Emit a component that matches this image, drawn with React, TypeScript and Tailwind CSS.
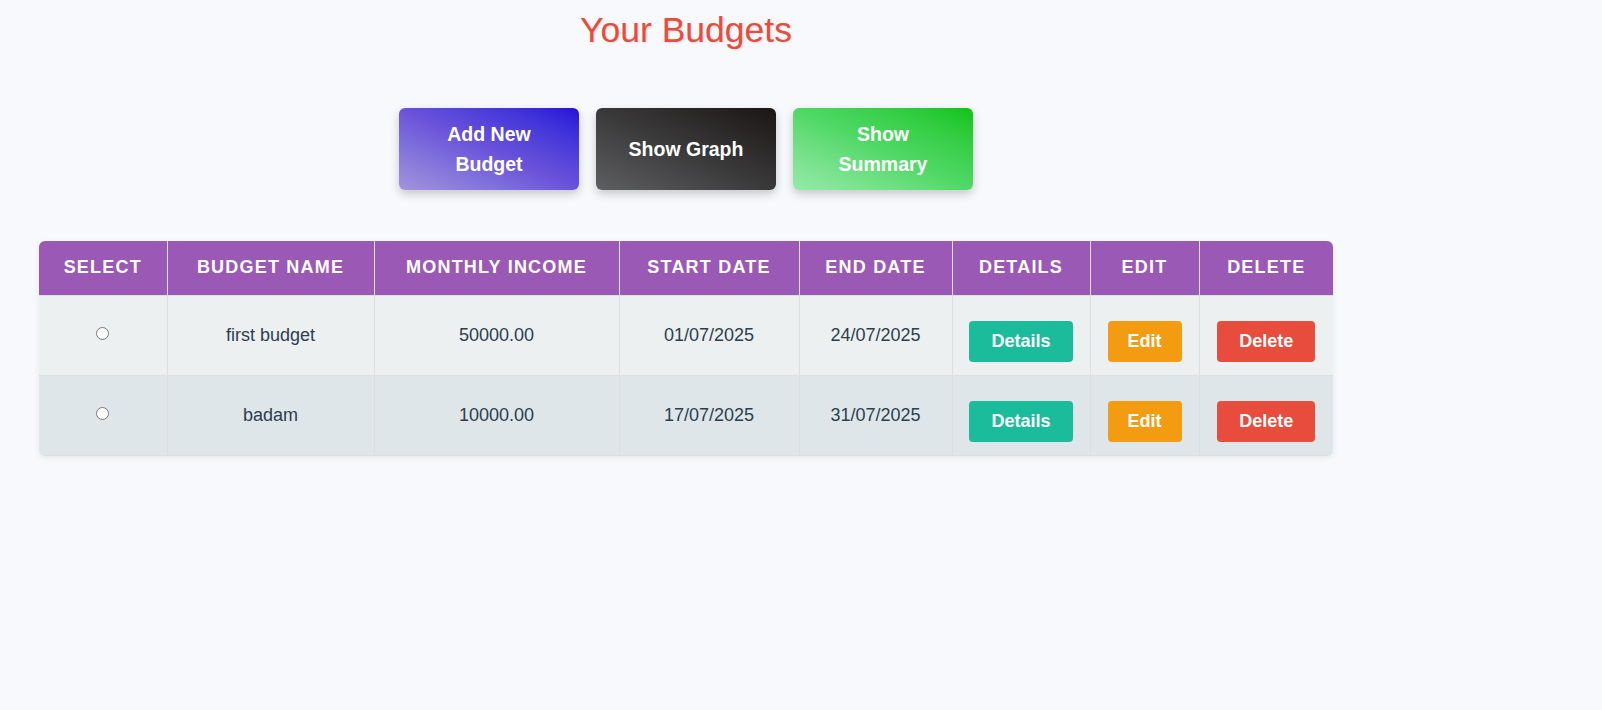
import React from 'react';

type Budget = {
  id: number;
  name: string;
  income: string;
  start: string;
  end: string;
};

const budgets: Budget[] = [
  { id: 1, name: 'first budget', income: '50000.00', start: '01/07/2025', end: '24/07/2025' },
  { id: 2, name: 'badam', income: '10000.00', start: '17/07/2025', end: '31/07/2025' },
];

const headers = ['Select', 'Budget Name', 'Monthly Income', 'Start Date', 'End Date', 'Details', 'Edit', 'Delete'];

const App: React.FC = () => {
  return (
    <div className="min-h-[710px] bg-[#f8f9fc] font-['Liberation_Sans',Arial,sans-serif] text-[#2c3e50]">
      <div className="ml-[39px] w-[1294px] pt-[10px] flex flex-col items-center">
        <h1 className="text-[35.5px] leading-[40px] text-[#e74c3c] [text-shadow:1px_1px_2px_rgba(0,0,0,0.12)]">
          Your Budgets
        </h1>

        {/* Action buttons */}
        <div className="mt-[58px] flex gap-[17px]">
          <button className="w-[180px] h-[82px] px-5 rounded-md bg-linear-to-tr from-[#a394dc] via-[#6a52da] to-[#2a0ad8] text-white font-bold text-[19.5px] leading-[30px] shadow-[0_4px_10px_rgba(0,0,0,0.2)]">
            Add New Budget
          </button>
          <button className="w-[180px] h-[82px] px-5 rounded-md bg-linear-to-tr from-[#5e5f62] via-[#3a393a] to-[#1b1615] text-white font-bold text-[19.5px] leading-[30px] shadow-[0_4px_10px_rgba(0,0,0,0.2)]">
            Show Graph
          </button>
          <button className="w-[180px] h-[82px] px-5 rounded-md bg-linear-to-tr from-[#95eaa9] via-[#4fd866] to-[#08c410] text-white font-bold text-[19.5px] leading-[30px] shadow-[0_4px_10px_rgba(0,0,0,0.2)]">
            Show Summary
          </button>
        </div>

        {/* Budgets table */}
        <div className="mt-[51px] w-full rounded-md overflow-hidden shadow-[0_2px_6px_rgba(0,0,0,0.07)]">
          <table className="w-full table-fixed border-collapse text-[18px]">
            <colgroup>
              <col className="w-[128px]" />
              <col className="w-[207px]" />
              <col className="w-[245px]" />
              <col className="w-[180px]" />
              <col className="w-[153px]" />
              <col className="w-[138px]" />
              <col className="w-[109px]" />
              <col className="w-[134px]" />
            </colgroup>
            <thead>
              <tr className="bg-[#9b59b6] h-[54px]">
                {headers.map(h => (
                  <th
                    key={h}
                    className="border-x border-[#ddd] first:border-l-0 last:border-r-0 text-white font-bold uppercase tracking-[1.2px] align-middle text-center"
                  >
                    {h}
                  </th>
                ))}
              </tr>
            </thead>
            <tbody>
              {budgets.map((b, i) => (
                <tr key={b.id} className={`h-[80px] ${i % 2 === 0 ? 'bg-[#ecf0f1]' : 'bg-[#dfe6e9]'}`}>
                  <td className="border border-l-0 border-[#dcdfe0] text-center align-middle">
                    <input type="radio" name="selectedBudget" className="align-middle mb-[4px]" />
                  </td>
                  <td className="border border-[#dcdfe0] text-center align-middle">{b.name}</td>
                  <td className="border border-[#dcdfe0] text-center align-middle">{b.income}</td>
                  <td className="border border-[#dcdfe0] text-center align-middle">{b.start}</td>
                  <td className="border border-[#dcdfe0] text-center align-middle">{b.end}</td>
                  <td className="border border-[#dcdfe0] text-center align-middle">
                    <button className="mt-[13px] h-[41px] px-[22px] rounded bg-[#1abc9c] text-white font-bold">
                      Details
                    </button>
                  </td>
                  <td className="border border-[#dcdfe0] text-center align-middle">
                    <button className="mt-[13px] h-[41px] px-[20px] rounded bg-[#f39c12] text-white font-bold">
                      Edit
                    </button>
                  </td>
                  <td className="border border-r-0 border-[#dcdfe0] text-center align-middle">
                    <button className="mt-[13px] h-[41px] px-[22px] rounded bg-[#e74c3c] text-white font-bold">
                      Delete
                    </button>
                  </td>
                </tr>
              ))}
            </tbody>
          </table>
        </div>
      </div>
    </div>
  );
};

export default App;
